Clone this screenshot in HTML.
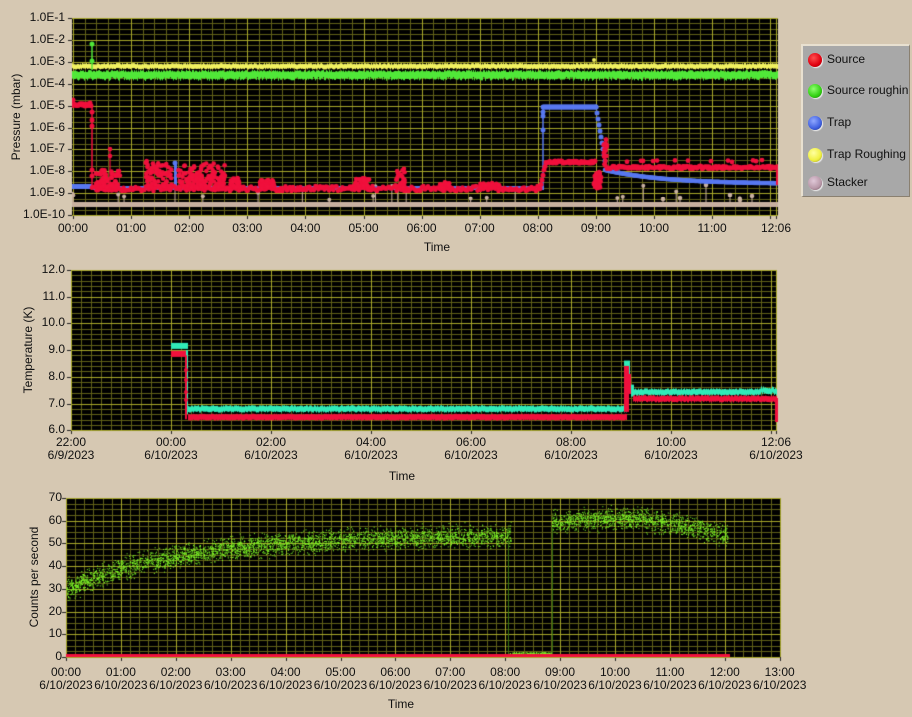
<!DOCTYPE html>
<html><head><meta charset="utf-8">
<style>
html,body{margin:0;padding:0;background:#d6c8b2;}
#w{position:relative;width:912px;height:717px;overflow:hidden;background:#d6c8b2;font-family:"Liberation Sans",sans-serif;font-size:12px;color:#111;}
canvas{position:absolute;left:0;top:0;}
.t{position:absolute;white-space:nowrap;line-height:13px;}
.r{text-align:right;width:60px;}
.c{text-align:center;width:80px;}
.rot{position:absolute;transform:rotate(-90deg);transform-origin:center;white-space:nowrap;text-align:center;width:160px;}
.leg{position:absolute;left:801px;top:44px;width:106px;height:150px;background:#a8a8a8;border-top:2px solid #e8e0d0;border-left:2px solid #e8e0d0;border-right:1px solid #8a8070;border-bottom:1px solid #8a8070;}
.dot{position:absolute;width:14px;height:14px;border-radius:50%;left:5px;box-shadow:1px 1px 1px #eee;}
.lt{position:absolute;left:24px;font-size:12px;}
</style></head><body>
<div id="w">
<canvas id="c" width="912" height="717"></canvas>
<div class="leg">
 <div class="dot" style="top:7px;background:radial-gradient(circle at 40% 35%,#ff5050,#e00010 60%,#900);"></div><div class="lt" style="top:6px">Source</div>
 <div class="dot" style="top:38px;background:radial-gradient(circle at 40% 35%,#90ff70,#30d010 60%,#207010);"></div><div class="lt" style="top:37px">Source roughin</div>
 <div class="dot" style="top:70px;background:radial-gradient(circle at 40% 35%,#90a8ff,#4060e0 60%,#203080);"></div><div class="lt" style="top:69px">Trap</div>
 <div class="dot" style="top:102px;background:radial-gradient(circle at 40% 35%,#ffffa0,#f0f040 60%,#909020);"></div><div class="lt" style="top:101px">Trap Roughing</div>
 <div class="dot" style="top:130px;background:radial-gradient(circle at 40% 35%,#e0c8d8,#b898a8 60%,#705060);"></div><div class="lt" style="top:129px">Stacker</div>
</div>
<div id="labels"></div>
</div>
<script>
var c=document.getElementById('c'),g=c.getContext('2d'),L=document.getElementById('labels');
var s=12345;function R(){s|=0;s=s+0x6D2B79F5|0;var t=Math.imul(s^s>>>15,1|s);t=t+Math.imul(t^t>>>7,61|t)^t;return((t^t>>>14)>>>0)/4294967296;}
function lab(x,y,txt,cls){var d=document.createElement('div');d.className='t '+(cls||'');d.style.left=x+'px';d.style.top=y+'px';d.innerHTML=txt;L.appendChild(d);}
function rot(cx,cy,txt){var d=document.createElement('div');d.className='rot';d.style.left=(cx-80)+'px';d.style.top=(cy-7)+'px';d.textContent=txt;L.appendChild(d);}
function line(x0,y0,x1,y1,col,w){g.strokeStyle=col;g.lineWidth=w||1;g.beginPath();g.moveTo(x0,y0);g.lineTo(x1,y1);g.stroke();}
var MIN='#626218',MAJ='#a8a82a';
function panel(x0,y0,x1,y1,vmin,vmaj,hmin,hmaj){
 g.fillStyle='#000';g.fillRect(x0,y0,x1-x0,y1-y0);
 vmin.forEach(function(x){line(Math.round(x)+.5,y0,Math.round(x)+.5,y1,MIN);});
 hmin.forEach(function(y){line(x0,Math.round(y)+.5,x1,Math.round(y)+.5,MIN);});
 vmaj.forEach(function(x){line(Math.round(x)+.5,y0,Math.round(x)+.5,y1,MAJ);line(Math.round(x)+.5,y1,Math.round(x)+.5,y1+4,'#222');});
 hmaj.forEach(function(y){line(x0,Math.round(y)+.5,x1,Math.round(y)+.5,MAJ);line(x0-4,Math.round(y)+.5,x0,Math.round(y)+.5,'#222');});
}
function dot(x,y,r,col){g.fillStyle=col;g.beginPath();g.arc(x,y,r,0,7);g.fill();}
// ===== Plot 1 =====
var hx=58.1,dx0=73,dec=21.9;
var vmaj=[],vmin=[],hmaj=[],hmin=[],i,j,x,k;
for(i=0;i<=12;i++)vmaj.push(dx0+i*hx);vmaj.push(776);
for(i=0;i<13;i++)for(j=1;j<5;j++){x=dx0+i*hx+j*hx/5;if(x<778)vmin.push(x);}
for(i=0;i<=9;i++)hmaj.push(18+i*dec);
for(i=0;i<9;i++)for(j=1;j<4;j++)hmin.push(18+i*dec+j*dec/4);
panel(72,18,778,215,vmin,vmaj,hmin,hmaj);
var Y='#f0f060',GR='#50e838',RD='#f0103c',BL='#5878f0',ST='#c8b0a0';
g.save();g.beginPath();g.rect(72,18,706,197);g.clip();
g.fillStyle=ST;g.fillRect(72,202,706,5);
for(i=0;i<30;i++){var sx=72+R()*706,sy=185+R()*15;if(sx>540&&R()<.5)continue;line(sx,sy,sx,204,ST,1);dot(sx,sy,2,ST);}
[[680,198],[706,185],[730,195],[740,200],[752,196],[663,199]].forEach(function(p){line(p[0],p[1],p[0],204,ST,1);dot(p[0],p[1],2.3,ST);});
for(x=72;x<778;x++){g.fillStyle=Y;g.fillRect(x,63+R()*1.5,1,5);g.fillStyle=GR;g.fillRect(x,70+R()*2,1,7+R()*2);}
line(92,44,92,70,GR,1.5);dot(92,44,2.5,GR);dot(92,61,2.5,GR);dot(594,60,2,Y);
g.fillStyle=BL;g.fillRect(72,184,20,5);g.fillRect(92,186,452,4);
g.fillRect(174,162,3,26);dot(175,163,2.5,BL);
for(x=72;x<92;x++)dot(x,103+R()*3,2.5,RD);dot(73,100,2.5,RD);
line(92,104,92,190,RD,1.5);[112,120,126,170,176].forEach(function(y){dot(92,y,2.5,RD);});
line(110,148,110,185,RD,1.2);dot(110,149,2.3,RD);dot(110,156,2.3,RD);
for(x=92;x<540;x+=1.5)dot(x,186+R()*5,2.3,RD);
function cl(a,b,top){for(var q=0;q<(b-a)*3;q++){var xx=a+R()*(b-a);dot(xx,188-(188-top)*Math.pow(R(),1.5),2.3,RD);}}
cl(96,120,170);cl(145,172,161);cl(178,200,165);cl(200,225,162);cl(230,240,178);cl(355,370,178);cl(395,405,168);cl(260,275,180);cl(440,450,182);cl(480,500,183);
line(543,188,543,106,BL,1.5);[130,112,116].forEach(function(y){dot(543,y,2.5,BL);});
for(x=543;x<597;x++)dot(x,107,2.5,BL);
for(x=596;x<606;x++)dot(x,107+(x-596)*6,2.5,BL);
for(x=605;x<778;x++)dot(x,170+14*(1-Math.exp(-(x-605)/60)),2.3,BL);
for(x=540;x<596;x++){var yy=x<546?188-(x-540)*4.6:161;dot(x,yy+R()*2,2.5,RD);}
for(k=0;k<30;k++)dot(594+R()*8,172+R()*16,2.5,RD);
for(k=0;k<20;k++)dot(603+R()*4,138+R()*30,2.3,RD);
for(x=607;x<778;x++){dot(x,169-R()*3-(R()<.08?6:0),2.4,RD);}
line(777,165,777,185,RD,2);
g.restore();
var yl=['1.0E-1','1.0E-2','1.0E-3','1.0E-4','1.0E-5','1.0E-6','1.0E-7','1.0E-8','1.0E-9','1.0E-10'];
yl.forEach(function(t,k){lab(5,18+k*dec-7,t,'r');});
var tl=['00:00','01:00','02:00','03:00','04:00','05:00','06:00','07:00','08:00','09:00','10:00','11:00'];
tl.forEach(function(t,k){lab(dx0+k*hx-40,222,t,'c');});lab(736,222,'12:06','c');
lab(397,241,'Time','c');rot(16,117,'Pressure (mbar)');
// ===== Plot 2 =====
vmaj=[];vmin=[];hmaj=[];hmin=[];
for(i=0;i<=14;i+=2)vmaj.push(71+i*50);vmaj.push(776);
for(x=71;x<777;x+=10)vmin.push(x);
for(i=0;i<=6;i++)hmaj.push(270+i*26.7);
for(i=0;i<6;i++)for(j=1;j<5;j++)hmin.push(270+i*26.7+j*26.7/5);
panel(71,270,777,430,vmin,vmaj,hmin,hmaj);
var CY='#30eab8';
function ty(T){return 430-(T-6)*26.7;}
for(x=171;x<188;x++){g.fillStyle=CY;g.fillRect(x,ty(9.15)-3,1,6);g.fillStyle=RD;g.fillRect(x,ty(8.85)-3,1,6);}
line(187,ty(9),187,ty(6.6),CY,2);line(186,ty(8.8),186,ty(6.4),RD,2);[370,380,392,400].forEach(function(y){dot(186,y,2,RD);});
for(x=188;x<627;x++){g.fillStyle=CY;g.fillRect(x,ty(6.82)-3+R()*1.5,1,6);g.fillStyle=RD;g.fillRect(x,ty(6.5)-3+R()*1,1,6);}
g.fillStyle=CY;g.fillRect(624,ty(8.6),6,26);g.fillStyle=RD;g.fillRect(624,ty(8.4),5,46);g.fillRect(627,ty(8.1),4,20);
g.fillStyle=CY;g.fillRect(631,ty(7.7),3,12);
for(x=633;x<777;x++){g.fillStyle=CY;g.fillRect(x,ty(7.45)-3+R()*1.5-(x>760?R()*2:0),1,6);g.fillStyle=RD;g.fillRect(x,ty(7.2)-3+R()*1.5,1,6);}
g.fillStyle=RD;g.fillRect(775,ty(7.2),3,ty(6.3)-ty(7.2));
['12.0','11.0','10.0','9.0','8.0','7.0','6.0'].forEach(function(t,k){lab(5,270+k*26.7-7,t,'r');});
[['22:00','6/9/2023'],['00:00','6/10/2023'],['02:00','6/10/2023'],['04:00','6/10/2023'],['06:00','6/10/2023'],['08:00','6/10/2023'],['10:00','6/10/2023']].forEach(function(p,k){lab(71+k*100-40,436,p[0]+'<br>'+p[1],'c');});
lab(736,436,'12:06<br>6/10/2023','c');
lab(362,470,'Time','c');rot(28,350,'Temperature (K)');
// ===== Plot 3 =====
vmaj=[];vmin=[];hmaj=[];hmin=[];var h3=54.9;
for(i=0;i<=13;i++)vmaj.push(66+i*h3);
for(i=0;i<13;i++)for(j=1;j<6;j++)vmin.push(66+i*h3+j*h3/6);
for(i=0;i<=7;i++)hmaj.push(498+i*22.7);
for(i=0;i<7;i++)for(j=1;j<4;j++)hmin.push(498+i*22.7+j*22.7/4);
panel(66,498,780,657,vmin,vmaj,hmin,hmaj);
g.fillStyle='#80ff28';
function gy(v){return 657-v*2.27;}
var h,v;
for(k=0;k<3600;k++){h=R()*8.1;v=30+24*(1-Math.exp(-h/2.2))+(R()+R()+R()-1.5)*4.5;g.fillRect(66+h*h3,gy(v),1,1);}
for(k=0;k<1400;k++){h=8.85+R()*3.2;v=59.5+1.5*Math.sin((h-8.85)*1.2)-(h>10.5?(h-10.5)*3:0)+(R()+R()+R()-1.5)*4.5;g.fillRect(66+h*h3,gy(v),1,1);}
for(k=0;k<150;k++){h=8.05+R()*0.8;g.fillRect(66+h*h3,gy(1+R()*1.2),1,1);}
line(66+8.05*h3+.5,gy(52),66+8.05*h3+.5,gy(1),'#3a7a14',1);line(66+8.85*h3+.5,gy(57),66+8.85*h3+.5,gy(1),'#3a7a14',1);
g.fillStyle=RD;g.fillRect(66,654,664,3);
['70','60','50','40','30','20','10','0'].forEach(function(t,k){lab(2,498+k*22.7-7,t,'r');});
for(i=0;i<=13;i++){lab(66+i*h3-40,666,(i<10?'0':'')+i+':00<br>6/10/2023','c');}
lab(361,698,'Time','c');rot(34,577,'Counts per second');
</script>
</body></html>
